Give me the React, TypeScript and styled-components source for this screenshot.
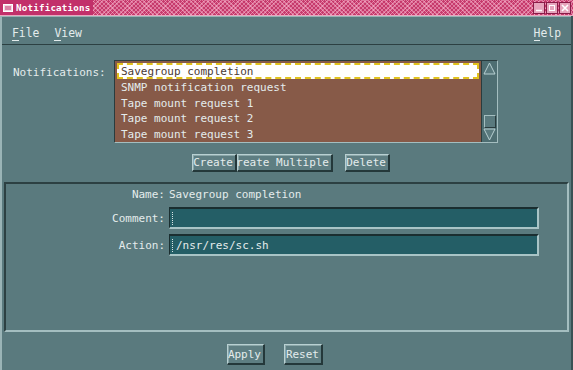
import React from 'react'
import styled, { createGlobalStyle } from 'styled-components'

const mono = `'DejaVu Sans Mono', 'Liberation Mono', monospace`

const Global = createGlobalStyle`
	html, body {
		margin: 0;
		padding: 0;
		background: #5a7a7e;
	}
	body {
		font-family: ${mono};
	}
`

const Window = styled.div`
	width: 573px;
	height: 370px;
	display: flex;
	flex-direction: column;
	background: #5a7a7e;
	color: #e4ecec;
	font-family: ${mono};
	font-size: 11px;
	overflow: hidden;
`

const TitleBar = styled.div`
	height: 15px;
	display: flex;
	align-items: center;
	background-color: #c63a6c;
	background-image: repeating-linear-gradient(
			45deg,
			rgba(255, 200, 220, 0.45) 0 1px,
			transparent 1px 3px
		),
		repeating-linear-gradient(
			-45deg,
			rgba(255, 200, 220, 0.45) 0 1px,
			transparent 1px 3px
		);
	border-bottom: 1px solid #e8a8c0;
`

const TitleLabel = styled.div`
	display: flex;
	align-items: center;
	gap: 3px;
	height: 15px;
	padding: 0 2px 0 3px;
	background: #c2306a;
	color: #fff;
	font-weight: bold;
	font-size: 9.2px;
	letter-spacing: 0.2px;
`

const TitleButtons = styled.div`
	margin-left: auto;
	display: flex;
	gap: 1px;
	padding-right: 2px;
`

const TitleButton = styled.div`
	width: 10px;
	height: 10px;
	background: #e6a4bc;
	border: 1px solid #8a1c48;
	display: flex;
	align-items: center;
	justify-content: center;
`

const Body = styled.div`
	flex: 1;
	display: flex;
	flex-direction: column;
	border-left: 2px solid #9ab4b6;
	border-right: 2px solid #3a5254;
`

const MenuBar = styled.div`
	height: 27px;
	display: flex;
	align-items: center;
	gap: 15px;
	padding: 0 10px;
	border-top: 1px solid #98b2b4;
	border-bottom: 1px solid #2c4042;
	font-size: 11.4px;
`

const MenuItem = styled.span<{ $right?: boolean }>`
	margin-left: ${p => (p.$right ? 'auto' : '0')};
	padding-top: 5px;
	u {
		text-decoration: none;
		border-bottom: 1px solid #e4ecec;
	}
`

const TopSection = styled.div`
	height: 137px;
	display: flex;
	flex-direction: column;
	padding-top: 15px;
	box-sizing: border-box;
`

const ListRow = styled.div`
	display: flex;
	align-items: flex-start;
`

const FieldLabel = styled.div`
	width: 101px;
	padding: 6px 0 0 11px;
`

const ListBox = styled.div`
	display: flex;
	width: 384px;
	height: 83px;
	border: 1px solid #2a3c3e;
	border-right-color: #a4bec0;
	border-bottom-color: #a4bec0;
	box-sizing: border-box;
`

const Items = styled.div`
	flex: 1;
	background: #875a48;
	padding: 2px 2px 0;
	overflow: hidden;
`

const Item = styled.div<{ $selected?: boolean }>`
	height: 15.6px;
	line-height: 13px;
	padding-left: ${p => (p.$selected ? '2px' : '4px')};
	white-space: nowrap;
	box-sizing: border-box;
	${p =>
		p.$selected
			? `background: #fff; color: #4a3a34; border: 2px dashed #e2c21c;`
			: `padding-top: 2.5px;`}
`

const ScrollBar = styled.div`
	width: 16px;
	display: flex;
	flex-direction: column;
	align-items: center;
	background: #4e6e72;
	border-left: 1px solid #2a3c3e;
	padding: 1px 0;
	box-sizing: border-box;
`

const Arrow = styled.svg`
	display: block;
	width: 13px;
	height: 13px;
`

const Thumb = styled.div`
	margin-top: auto;
	width: 12px;
	height: 13px;
	background: #5a7a7e;
	border: 1px solid #a4bec0;
	border-right-color: #2a3c3e;
	border-bottom-color: #2a3c3e;
	box-sizing: border-box;
`

const ButtonRow = styled.div<{ $pad: number; $top: number }>`
	display: flex;
	align-items: center;
	padding-left: ${p => p.$pad}px;
	margin-top: ${p => p.$top}px;
`

const Button = styled.div<{ $w: number; $gap?: number; $h?: number }>`
	width: ${p => p.$w}px;
	height: ${p => p.$h ?? 18}px;
	margin-left: ${p => p.$gap ?? 0}px;
	display: flex;
	align-items: center;
	justify-content: flex-end;
	overflow: hidden;
	white-space: nowrap;
	box-sizing: border-box;
	padding: 0 2px;
	background: #5e7e82;
	border: 1px solid #b8d0d2;
	border-right: 2px solid #24383a;
	border-bottom: 2px solid #24383a;
	box-shadow: inset 1px 1px 0 #8aa6a8;
`

const Frame = styled.div`
	height: 150px;
	margin: 0 2px;
	box-sizing: border-box;
	border: 2px solid #2c4042;
	border-right-color: #a4bec0;
	border-bottom-color: #a4bec0;
	display: grid;
	grid-template-columns: 159px 370px;
	grid-template-rows: 16px 22px 22px;
	column-gap: 4px;
	row-gap: 5px;
	align-content: start;
	align-items: center;
	padding-top: 2px;
`

const FormLabel = styled.div`
	text-align: right;
`

const Input = styled.div`
	height: 22px;
	box-sizing: border-box;
	background: #245e66;
	border: 1px solid #1a2e30;
	border-top-width: 2px;
	border-right: 2px solid #a8c4c6;
	border-bottom: 2px solid #a8c4c6;
	display: flex;
	align-items: center;
	padding-left: 2px;
	gap: 2px;
`

const Caret = styled.span`
	width: 1px;
	height: 13px;
	border-left: 1px dotted #d8e4e4;
`

const Bottom = styled.div`
	flex: 1;
	display: flex;
	align-items: flex-start;
`

const Up = () => (
	<Arrow viewBox="0 0 13 13">
		<path d="M6.5 1 L12 12 L1 12 Z" fill="#5a7a7e" stroke="#b8d0d2" strokeWidth="1" />
	</Arrow>
)

const Down = () => (
	<Arrow viewBox="0 0 13 13">
		<path d="M1 1 L12 1 L6.5 12 Z" fill="#5a7a7e" stroke="#b8d0d2" strokeWidth="1" />
	</Arrow>
)

const items = [
	'Savegroup completion',
	'SNMP notification request',
	'Tape mount request 1',
	'Tape mount request 2',
	'Tape mount request 3'
]

export default function App() {
	return (
		<>
			<Global />
			<Window>
				<TitleBar>
					<TitleLabel>
						<svg width="10" height="8" viewBox="0 0 10 8">
							<rect x="0.5" y="0.5" width="9" height="7" fill="#f4d8e4" stroke="#fff" />
							<line x1="2" y1="3" x2="8" y2="3" stroke="#c2306a" />
							<line x1="2" y1="5" x2="8" y2="5" stroke="#c2306a" />
						</svg>
						Notifications
					</TitleLabel>
					<TitleButtons>
						<TitleButton>
							<svg width="8" height="8" viewBox="0 0 8 8">
								<line x1="1" y1="6.5" x2="7" y2="6.5" stroke="#fff" strokeWidth="1.5" />
							</svg>
						</TitleButton>
						<TitleButton>
							<svg width="8" height="8" viewBox="0 0 8 8">
								<rect x="1.5" y="1.5" width="5" height="5" fill="none" stroke="#fff" />
							</svg>
						</TitleButton>
						<TitleButton>
							<svg width="8" height="8" viewBox="0 0 8 8">
								<path d="M1 1 L7 7 M7 1 L1 7" stroke="#fff" strokeWidth="1.6" />
							</svg>
						</TitleButton>
					</TitleButtons>
				</TitleBar>
				<Body>
					<MenuBar>
						<MenuItem>
							<u>F</u>ile
						</MenuItem>
						<MenuItem>
							<u>V</u>iew
						</MenuItem>
						<MenuItem $right>
							<u>H</u>elp
						</MenuItem>
					</MenuBar>
					<TopSection>
						<ListRow>
							<FieldLabel>Notifications:</FieldLabel>
							<ListBox>
								<Items>
									{items.map((t, i) => (
										<Item key={t} $selected={i === 0}>
											{t}
										</Item>
									))}
								</Items>
								<ScrollBar>
									<Up />
									<Thumb />
									<Down />
								</ScrollBar>
							</ListBox>
						</ListRow>
						<ButtonRow $pad={190} $top={11}>
							<Button $w={45}>Create</Button>
							<Button $w={96}>Create Multiple</Button>
							<Button $w={45} $gap={12}>
								Delete
							</Button>
						</ButtonRow>
					</TopSection>
					<Frame>
						<FormLabel>Name:</FormLabel>
						<div>Savegroup completion</div>
						<FormLabel>Comment:</FormLabel>
						<Input>
							<Caret />
						</Input>
						<FormLabel>Action:</FormLabel>
						<Input>
							<Caret />
							/nsr/res/sc.sh
						</Input>
					</Frame>
					<Bottom>
						<ButtonRow $pad={225} $top={12}>
							<Button $w={38} $h={21}>
								Apply
							</Button>
							<Button $w={39} $h={21} $gap={19}>
								Reset
							</Button>
						</ButtonRow>
					</Bottom>
				</Body>
			</Window>
		</>
	)
}
